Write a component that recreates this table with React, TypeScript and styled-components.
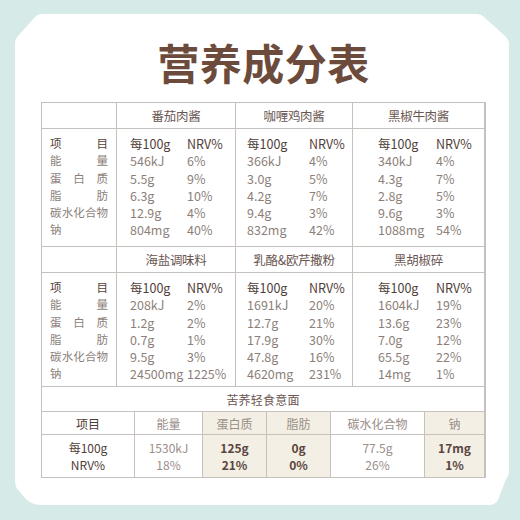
import React from "react";
import styled, { createGlobalStyle } from "styled-components";

const GlobalStyle = createGlobalStyle`
  html, body {
    margin: 0;
    padding: 0;
    background: #d6eae8;
  }
  body {
    font-family: "Noto Sans CJK SC", "Noto Sans", sans-serif;
  }
`;

const LINE = "#c7c1be";
const SHADE = "#f4efe4";

const Page = styled.div`
  width: 520px;
  height: 520px;
  padding: 14px 10px 13px 15px;
  box-sizing: border-box;
`;

const Card = styled.div`
  width: 495px;
  height: 493px;
  background: #ffffff;
  box-sizing: border-box;
  padding: 27px 24px 0 26px;
  clip-path: path("M26 0 L462 0 Q466 0 469 3 L490 22 Q494 26 494 30 L494 458 Q494 462 491 465 L483 486 Q480 491 474 491 L26 491 Q16 491 10 484 L3 476 Q0 472 0 466 L0 30 Q0 25 3 22 L20 3 Q23 0 26 0 Z");
`;

const Title = styled.h1`
  margin: 0 0 19px 0;
  text-align: center;
  font-size: 42px;
  line-height: 42px;
  font-weight: 700;
  color: #6d4b3c;
  letter-spacing: 0.5px;
`;

const Grid = styled.div<{ $cols: string; $rows: string; $top?: boolean }>`
  display: grid;
  grid-template-columns: ${p => p.$cols};
  grid-template-rows: ${p => p.$rows};
  gap: 1px;
  background: ${LINE};
  border: 1px solid ${LINE};
  border-top-width: ${p => (p.$top ? 1 : 0)}px;
  width: 445px;
  box-sizing: border-box;
`;

const Cell = styled.div<{ $shade?: boolean; $span?: number; $stack?: boolean }>`
  background: ${p => (p.$shade ? SHADE : "#ffffff")};
  grid-column: ${p => (p.$span ? `span ${p.$span}` : "auto")};
  display: flex;
  flex-direction: ${p => (p.$stack ? "column" : "row")};
  align-items: center;
  justify-content: center;
  box-sizing: border-box;
`;

const ProductName = styled.span`
  font-size: 12.5px;
  color: #6a5651;
  letter-spacing: -0.3px;
`;

const LabelCell = styled.div`
  background: #ffffff;
  padding: 6px 8px 0 8px;
  display: flex;
  flex-direction: column;
`;

const Label = styled.div<{ $head?: boolean }>`
  display: flex;
  justify-content: space-between;
  height: 17.3px;
  line-height: 17.3px;
  font-size: 11.5px;
  color: ${p => (p.$head ? "#4f3e38" : "#8c7f7a")};
`;

const DataCell = styled.div<{ $pad: number; $val: number }>`
  background: #ffffff;
  padding: 6px 0 0 ${p => p.$pad}px;
  display: grid;
  grid-template-columns: ${p => p.$val}px auto;
  grid-auto-rows: 17.3px;
  align-content: start;
`;

const Value = styled.span<{ $head?: boolean }>`
  font-size: 12.5px;
  line-height: 17.3px;
  white-space: nowrap;
  color: ${p => (p.$head ? "#4f3e38" : "#8c7f7a")};
`;

const SubTitle = styled.span`
  font-size: 12px;
  color: #6a5651;
  letter-spacing: 0.2px;
`;

const BottomText = styled.div<{ $strong?: boolean; $dark?: boolean }>`
  font-size: 12px;
  line-height: 17px;
  height: 17px;
  text-align: center;
  color: ${p => (p.$strong ? "#5a463f" : p.$dark ? "#4f3e38" : "#9a8e89")};
  font-weight: ${p => (p.$strong ? 700 : 400)};
`;

const labels = ["项目", "能量", "蛋白质", "脂肪", "碳水化合物", "钠"];

type Product = { name: string; rows: [string, string][] };

const topProducts: Product[] = [
  {
    name: "番茄肉酱",
    rows: [["546kJ", "6%"], ["5.5g", "9%"], ["6.3g", "10%"], ["12.9g", "4%"], ["804mg", "40%"]],
  },
  {
    name: "咖喱鸡肉酱",
    rows: [["366kJ", "4%"], ["3.0g", "5%"], ["4.2g", "7%"], ["9.4g", "3%"], ["832mg", "42%"]],
  },
  {
    name: "黑椒牛肉酱",
    rows: [["340kJ", "4%"], ["4.3g", "7%"], ["2.8g", "5%"], ["9.6g", "3%"], ["1088mg", "54%"]],
  },
];

const midProducts: Product[] = [
  {
    name: "海盐调味料",
    rows: [["208kJ", "2%"], ["1.2g", "2%"], ["0.7g", "1%"], ["9.5g", "3%"], ["24500mg", "1225%"]],
  },
  {
    name: "乳酪&欧芹撒粉",
    rows: [["1691kJ", "20%"], ["12.7g", "21%"], ["17.9g", "30%"], ["47.8g", "16%"], ["4620mg", "231%"]],
  },
  {
    name: "黑胡椒碎",
    rows: [["1604kJ", "19%"], ["13.6g", "23%"], ["7.0g", "12%"], ["65.5g", "22%"], ["14mg", "1%"]],
  },
];

const colLayout = [
  { pad: 13, val: 57 },
  { pad: 11, val: 62 },
  { pad: 25, val: 58 },
];

function Labels() {
  return (
    <LabelCell>
      {labels.map((l, i) => (
        <Label key={l} $head={i === 0}>
          {l.split("").map((c, j) => (
            <span key={j}>{c}</span>
          ))}
        </Label>
      ))}
    </LabelCell>
  );
}

function ProductBlock({ products }: { products: Product[] }) {
  return (
    <>
      <Cell />
      {products.map(p => (
        <Cell key={p.name}>
          <ProductName>{p.name}</ProductName>
        </Cell>
      ))}
      <Labels />
      {products.map((p, i) => (
        <DataCell key={p.name} $pad={colLayout[i].pad} $val={colLayout[i].val}>
          <Value $head>每100g</Value>
          <Value $head>NRV%</Value>
          {p.rows.map(([v, n]) => (
            <React.Fragment key={v}>
              <Value>{v}</Value>
              <Value>{n}</Value>
            </React.Fragment>
          ))}
        </DataCell>
      ))}
    </>
  );
}

const pasta = [
  { head: "能量", v: "1530kJ", n: "18%", shade: false },
  { head: "蛋白质", v: "125g", n: "21%", shade: true },
  { head: "脂肪", v: "0g", n: "0%", shade: true },
  { head: "碳水化合物", v: "77.5g", n: "26%", shade: false },
  { head: "钠", v: "17mg", n: "1%", shade: true },
];

export default function App() {
  return (
    <Page>
      <GlobalStyle />
      <Card>
        <Title>营养成分表</Title>
        <Grid $top $cols="74px 118px 116px 131px" $rows="25px 117px 25px 113px">
          <ProductBlock products={topProducts} />
          <ProductBlock products={midProducts} />
        </Grid>
        <Grid $cols="92px 67px 63px 63px 93px 59px" $rows="24px 22px 42px">
          <Cell $span={6}>
            <SubTitle>苦荞轻食意面</SubTitle>
          </Cell>
          <Cell>
            <BottomText $dark>项目</BottomText>
          </Cell>
          {pasta.map(c => (
            <Cell key={c.head} $shade={c.shade}>
              <BottomText>{c.head}</BottomText>
            </Cell>
          ))}
          <Cell $stack>
            <BottomText $dark>每100g</BottomText>
            <BottomText $dark>NRV%</BottomText>
          </Cell>
          {pasta.map(c => (
            <Cell key={c.v} $shade={c.shade} $stack>
              <BottomText $strong={c.shade}>{c.v}</BottomText>
              <BottomText $strong={c.shade}>{c.n}</BottomText>
            </Cell>
          ))}
        </Grid>
      </Card>
    </Page>
  );
}
